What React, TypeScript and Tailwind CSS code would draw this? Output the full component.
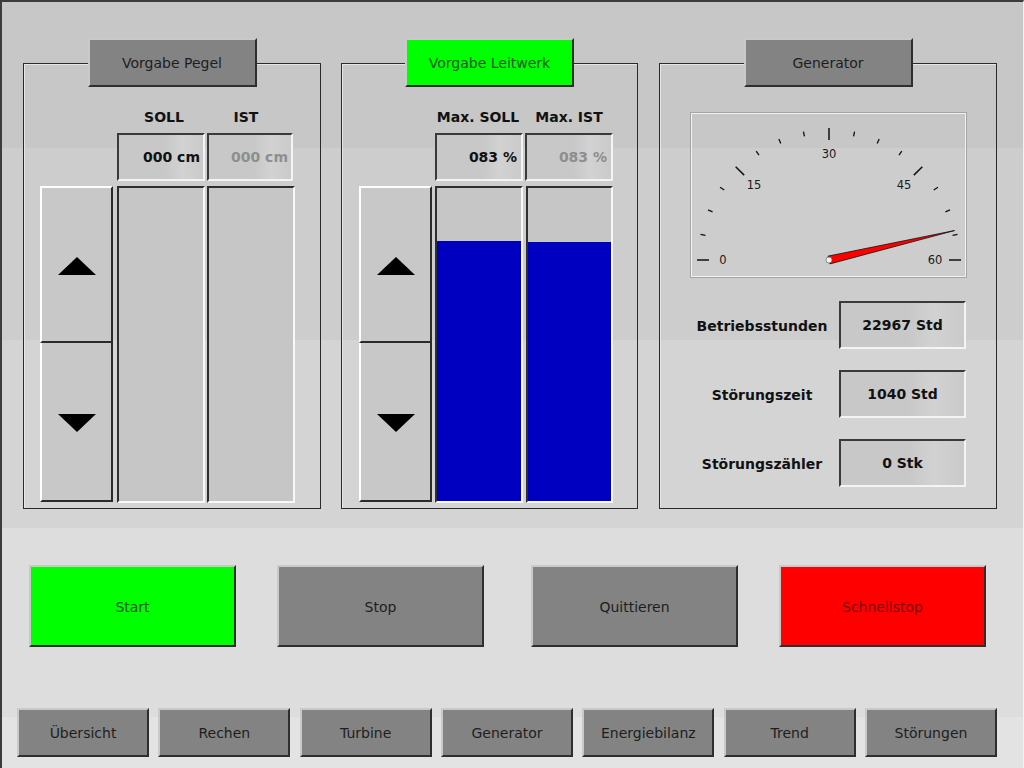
import React from 'react';

const FONT = "font-['DejaVu_Sans',sans-serif]";

type BtnProps = {
  label: string;
  className?: string;
  tone?: 'gray' | 'green' | 'red';
};

function HmiButton({ label, className = '', tone = 'gray' }: BtnProps) {
  const fill =
    tone === 'green'
      ? 'bg-[#00ff00] text-[#0b5a0b]'
      : tone === 'red'
        ? 'bg-[#ff0000] text-[#7a0000]'
        : 'bg-[#838383] text-[#1e1e1e]';
  return (
    <div
      className={`flex items-center justify-center border-t-2 border-l-2 border-r-2 border-b-2 border-t-[#c9c9c9] border-l-[#c9c9c9] border-r-[#2e2e2e] border-b-[#2e2e2e] pt-[2px] text-[14px] ${fill} ${className}`}
    >
      {label}
    </div>
  );
}

function ValueBox({ text, dim = false, className = '' }: { text: string; dim?: boolean; className?: string }) {
  return (
    <div
      className={`flex h-[48px] items-center border-2 border-t-[#3a3a3a] border-l-[#3a3a3a] border-r-[#f4f4f4] border-b-[#f4f4f4] bg-[linear-gradient(to_right,#c8c8c8_0%,#c8c8c8_55%,#d2d2d2_75%,#cacaca_100%)] pt-[1px] text-[14px] font-bold ${dim ? 'text-[#8e8e8e]' : 'text-[#111]'} ${className}`}
    >
      {text}
    </div>
  );
}

function Bar({ percent, className = '' }: { percent: number; className?: string }) {
  return (
    <div
      className={`flex h-[317px] flex-col justify-end border-2 border-t-[#2e2e2e] border-l-[#2e2e2e] border-r-[#f8f8f8] border-b-[#f8f8f8] bg-[#c6c6c6] ${className}`}
    >
      <div className="bg-[#0000c0]" style={{ height: `${percent}%` }} />
    </div>
  );
}

function Arrow({ up }: { up: boolean }) {
  return (
    <svg width="38" height="18" viewBox="0 0 38 18">
      <polygon points={up ? '19,0 38,18 0,18' : '0,0 38,0 19,18'} fill="#000" />
    </svg>
  );
}

function UpDown({ className = '' }: { className?: string }) {
  return (
    <div className={`flex w-[73px] flex-col ${className}`}>
      <div className="flex h-[157px] items-center justify-center border-t-2 border-l-2 border-r-2 border-b-2 border-t-white border-l-white border-r-[#2a2a2a] border-b-[#2a2a2a] bg-[#c8c8c8] pt-[3px]">
        <Arrow up />
      </div>
      <div className="flex h-[159px] items-center justify-center border-l-2 border-r-2 border-b-2 border-l-white border-r-[#2a2a2a] border-b-[#2a2a2a] bg-[#c8c8c8] pt-[2px]">
        <Arrow up={false} />
      </div>
    </div>
  );
}

function Panel({
  title,
  tone = 'gray',
  width,
  children,
}: {
  title: string;
  tone?: 'gray' | 'green';
  width: string;
  children: React.ReactNode;
}) {
  return (
    <div className={`flex flex-col items-center ${width}`}>
      <HmiButton label={title} tone={tone} className="relative z-10 h-[49px] w-[169px]" />
      <div className="-mt-[24px] h-[446px] self-stretch border border-[#2a2a2a] shadow-[inset_1px_1px_0_#e6e6e6]">
        {children}
      </div>
    </div>
  );
}

function Gauge({ value }: { value: number }) {
  const cx = 139;
  const cy = 148;
  const pt = (deg: number, r: number) => {
    const a = (deg * Math.PI) / 180;
    return [cx + r * Math.cos(a), cy - r * Math.sin(a)];
  };
  const ticks = Array.from({ length: 17 }, (_, i) => {
    const deg = 180 - i * 11.25;
    const major = i % 4 === 0;
    const [x1, y1] = pt(deg, major ? 120 : 126);
    const [x2, y2] = pt(deg, major ? 132 : 131);
    return <line key={i} x1={x1} y1={y1} x2={x2} y2={y2} stroke="#111" strokeWidth={major ? 1.5 : 1.3} />;
  });
  const labels = [0, 15, 30, 45, 60].map((v) => {
    const [x, y] = pt(180 - v * 3, 106);
    return (
      <text key={v} x={x} y={y + 4} textAnchor="middle" fontSize="11.5" fill="#1a1a1a" fontFamily="DejaVu Sans, sans-serif">
        {v}
      </text>
    );
  });
  const nd = 180 - value * 3;
  const [tx, ty] = pt(nd, 129);
  const [b1x, b1y] = pt(nd + 90, 4);
  const [b2x, b2y] = pt(nd - 90, 4);
  return (
    <div className="mx-auto h-[166px] w-[277px] border border-[#a4a4a4] shadow-[inset_1px_1px_0_#f2f2f2,inset_-1px_-1px_0_#f2f2f2]">
      <svg width="275" height="164" viewBox="1 1 275 164">
        {ticks}
        {labels}
        <polygon points={`${b1x},${b1y} ${tx},${ty} ${b2x},${b2y}`} fill="#ff0000" stroke="#111" strokeWidth="0.8" />
        <circle cx={cx} cy={cy} r="3" fill="#f4f4f4" stroke="#666" strokeWidth="0.7" />
      </svg>
    </div>
  );
}

function InfoRow({ label, value }: { label: string; value: string }) {
  return (
    <div className="flex items-center pl-[30px]">
      <div className="w-[144px] pt-[2px] text-center text-[14px] font-bold text-[#111]">{label}</div>
      <ValueBox text={value} className="ml-[5px] w-[127px] justify-center" />
    </div>
  );
}

export default function App() {
  const nav = ['Übersicht', 'Rechen', 'Turbine', 'Generator', 'Energiebilanz', 'Trend', 'Störungen'];
  return (
    <div
      className={`h-[768px] w-[1024px] overflow-hidden border-t-2 border-l-2 border-r border-t-[#3c3c3c] border-l-[#3c3c3c] border-r-[#f2f2f2] bg-[linear-gradient(to_bottom,#c7c7c7_0px,#c7c7c7_146px,#cdcdcd_146px,#cdcdcd_338px,#d4d4d4_338px,#d4d4d4_526px,#dddddd_526px,#dddddd_715px,#e3e3e3_715px)] ${FONT}`}
    >
      <div className="flex pt-[36px] pl-[21px]">
        <Panel title="Vorgabe Pegel" width="w-[298px]">
          <div className="flex flex-col pt-[43px] pl-[16px]">
            <div className="ml-[77px] flex h-[20px] items-center text-[14px] font-bold text-[#111]">
              <div className="w-[94px] text-center">SOLL</div>
              <div className="w-[70px] text-center">IST</div>
            </div>
            <div className="ml-[77px] mt-[6px] flex">
              <ValueBox text="000 cm" className="w-[88px] justify-end pr-[3px]" />
              <ValueBox text="000 cm" dim className="ml-[2px] w-[86px] justify-end pr-[3px]" />
            </div>
            <div className="mt-[5px] flex">
              <UpDown />
              <Bar percent={0} className="ml-[4px] w-[88px]" />
              <Bar percent={0} className="ml-[2px] w-[88px]" />
            </div>
          </div>
        </Panel>

        <div className="ml-[20px]">
          <Panel title="Vorgabe Leitwerk" tone="green" width="w-[297px]">
            <div className="flex flex-col pt-[43px] pl-[17px]">
              <div className="ml-[76px] flex h-[20px] items-center text-[14px] font-bold text-[#111]">
                <div className="w-[86px] text-center">Max. SOLL</div>
                <div className="ml-[3px] w-[90px] text-center">Max. IST</div>
              </div>
              <div className="ml-[76px] mt-[6px] flex">
                <ValueBox text="083 %" className="w-[88px] justify-end pr-[4px]" />
                <ValueBox text="083 %" dim className="ml-[2px] w-[88px] justify-end pr-[4px]" />
              </div>
              <div className="mt-[5px] flex">
                <UpDown />
                <Bar percent={83} className="ml-[3px] w-[88px]" />
                <Bar percent={82.6} className="ml-[3px] w-[87px]" />
              </div>
            </div>
          </Panel>
        </div>

        <div className="ml-[21px]">
          <Panel title="Generator" width="w-[338px]">
            <div className="flex flex-col pt-[48px]">
              <Gauge value={55.6} />
              <div className="mt-[23px] flex flex-col gap-[21px]">
                <InfoRow label="Betriebsstunden" value="22967 Std" />
                <InfoRow label="Störungszeit" value="1040 Std" />
                <InfoRow label="Störungszähler" value="0 Stk" />
              </div>
            </div>
          </Panel>
        </div>
      </div>

      <div className="mt-[56px] flex pl-[27px]">
        <HmiButton label="Start" tone="green" className="h-[82px] w-[207px]" />
        <HmiButton label="Stop" className="ml-[41px] h-[82px] w-[207px]" />
        <HmiButton label="Quittieren" className="ml-[47px] h-[82px] w-[207px]" />
        <HmiButton label="Schnellstop" tone="red" className="ml-[41px] h-[82px] w-[207px]" />
      </div>

      <div className="mt-[61px] flex gap-[9.33px] pl-[15px]">
        {nav.map((n) => (
          <HmiButton key={n} label={n} className="h-[49px] w-[132px]" />
        ))}
      </div>
    </div>
  );
}
